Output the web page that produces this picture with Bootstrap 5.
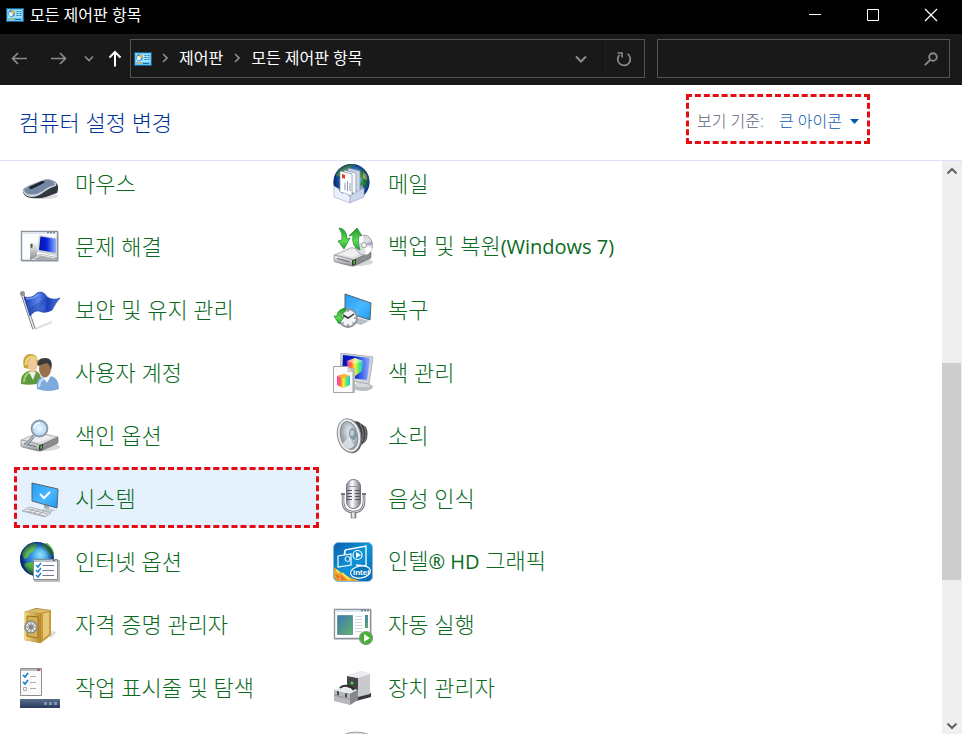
<!DOCTYPE html>
<html lang="ko">
<head>
<meta charset="utf-8">
<meta name="viewport" content="width=device-width, initial-scale=1">
<title>모든 제어판 항목</title>
<link href="https://cdn.jsdelivr.net/npm/bootstrap@5.3.0/dist/css/bootstrap.min.css" rel="stylesheet">
<style>
body{font-family:"Open Sans","Noto Sans CJK KR",sans-serif;font-size:16px;font-weight:300;line-height:24px;background:#fff;color:#000}
svg{display:block;flex:none}
button svg{margin:auto}
.titlebar{background:#000;color:#fff;height:34px;padding:0 2px 4px 6px;gap:6px;font-weight:400}
.win-btns{gap:0}
.win-btn{width:58px;height:34px;border:0;background:none;color:#fff;padding:0}
.toolbar{background:#191919;height:51px;padding:5px 12px 8px 0;color:#8b8b8b}
.nav-btn{border:0;background:none;color:inherit;padding:0;height:38px}
.nav-btn.wide{width:39px}
.nav-btn.slim{width:21px}
.nav-btn.up{width:31px;color:#fff}
.address{border:1px solid #535353;height:39px;flex:514 1 0;padding-left:3px;font-weight:400;min-width:0}
.address a{color:#fff;text-decoration:none;white-space:nowrap}
.address ol{gap:11px;margin:0 0 2px;padding-left:10px}
.addr-btn{border:0;background:none;color:inherit;padding:0;width:42px;height:37px}
.addr-btn.sep{border-left:1px solid #111}
.search{border:1px solid #535353;height:39px;flex:293 1 0;margin-left:12px;min-width:0}
.search input{background:none;border:0;outline:0;color:#fff;min-width:0}
.search button{border:0;background:none;color:inherit;width:36px;padding:0}
.band{height:76px;padding:9px 92px 0 19px;border-bottom:1px solid #d9e3f1}
.band h1{font-size:22px;line-height:30px;font-weight:300;color:#003399;margin:0 0 11px}
.hot{border:3px dashed #e60d12}
.viewby{height:50px;width:184px;padding:4px 8px 0;color:#5a6478;margin-bottom:16px}
.viewby button{border:0;background:none;padding:0;color:#0a59b0;font-weight:300}
.items{gap:8px;padding:0 14px;margin-top:-9px}
.items ul{display:grid;gap:2px;width:305px;align-content:start;margin:0}
.item{display:flex;gap:15px;align-items:center;height:61px;padding:12px 6px 9px;font-size:22px;line-height:30px;color:#0b6a1d;text-decoration:none;white-space:nowrap}
.item:hover{color:#0b6a1d;text-decoration:underline}
.item span{padding-bottom:2px}
.item small{font-size:20px;font-weight:400}
.item.hot{padding:9px 3px 6px;background:#e5f2fd}
.scrollbar-v{width:20px;background:#efefef;color:#606060}
.scrollbar-v button{border:0;background:none;padding:0;height:20px;color:inherit}
.scrollbar-v button:last-child{padding-top:4px}
.thumb{flex:217 1 0;background:#cdcdcd;margin-right:1px}
.before{flex:182 1 0}.after{flex:134 1 0}
</style>
<script src="https://cdn.jsdelivr.net/npm/bootstrap@5.3.0/dist/js/bootstrap.bundle.min.js"></script>
</head>
<body class="vh-100 d-flex flex-column overflow-hidden">
<svg width="0" height="0" class="position-absolute" aria-hidden="true">
<defs>
<linearGradient id="metal" x2="0" y2="1"><stop stop-color="#f8f8f8"/><stop offset="1" stop-color="#8b8d90"/></linearGradient>
<linearGradient id="metalh"><stop stop-color="#85858e"/><stop offset=".4" stop-color="#fff"/><stop offset="1" stop-color="#74747e"/></linearGradient>
<linearGradient id="sky" x2="1" y2="1"><stop stop-color="#1f9df2"/><stop offset=".55" stop-color="#4ab8ff"/><stop offset="1" stop-color="#1c98f0"/></linearGradient>
<linearGradient id="royal"><stop stop-color="#0414a8"/><stop offset=".45" stop-color="#0825d8"/><stop offset="1" stop-color="#8fb0ff"/></linearGradient>
<linearGradient id="flagb"><stop stop-color="#1b3fae"/><stop offset=".4" stop-color="#5c86ec"/><stop offset=".65" stop-color="#1c3dba"/><stop offset="1" stop-color="#4f7be0"/></linearGradient>
<linearGradient id="gold"><stop stop-color="#f3dc8a"/><stop offset="1" stop-color="#b78a2c"/></linearGradient>
<linearGradient id="leaf" x2="0" y2="1"><stop stop-color="#1f9a2b"/><stop offset=".6" stop-color="#5fdc55"/><stop offset="1" stop-color="#22a52a"/></linearGradient>
<linearGradient id="rainbow"><stop stop-color="#ff35d0"/><stop offset=".25" stop-color="#ff6a3c"/><stop offset=".5" stop-color="#ffee35"/><stop offset=".75" stop-color="#48ef6c"/><stop offset="1" stop-color="#2bbcff"/></linearGradient>
<linearGradient id="navy" x2="0" y2="1"><stop stop-color="#5b6d8c"/><stop offset="1" stop-color="#283a5c"/></linearGradient>
<linearGradient id="teal" x2="1" y2="1"><stop stop-color="#3a78b4"/><stop offset="1" stop-color="#63b26b"/></linearGradient>
<linearGradient id="intelb" x2="1" y2="1"><stop stop-color="#0a5fae"/><stop offset=".5" stop-color="#0d93d8"/><stop offset="1" stop-color="#0a68b4"/></linearGradient>
<linearGradient id="green" x2="1" y2="1"><stop stop-color="#7fdc4c"/><stop offset="1" stop-color="#1b7f2c"/></linearGradient>
<radialGradient id="ocean" cx=".6" cy=".38" r=".65"><stop stop-color="#8fe3fb"/><stop offset=".45" stop-color="#2f8fdc"/><stop offset="1" stop-color="#0c2f86"/></radialGradient>
<radialGradient id="rim"><stop offset=".6" stop-color="#06205f" stop-opacity="0"/><stop offset="1" stop-color="#06205f" stop-opacity=".75"/></radialGradient>
<radialGradient id="cone" cx=".6" cy=".4"><stop stop-color="#eef4f7"/><stop offset="1" stop-color="#9aa6ad"/></radialGradient>
<radialGradient id="lens"><stop stop-color="#f4faff"/><stop offset="1" stop-color="#acd3f4"/></radialGradient>
<symbol id="cpl" viewBox="0 0 18 14"><path fill="#16648f" d="M0 0h18v14H0z"/><path fill="#63c2f2" d="M1 1h16v12H1z"/><path fill="#a5e0fb" d="M2 2h14v8H2z"/><circle cx="5.500" cy="5.500" r="3.200" fill="#1f7fc0"/><circle cx="5" cy="6" r="2.200" fill="#e8f4fa"/><path d="M5.500 5.500V2.300A3.200 3.200 0 0 1 8.500 6z" fill="#f5b840"/><path d="M10.500 3.500h2M13.500 3.500h2M10.500 5.500h2M13.500 5.500h2M10.500 7.500h2M13.500 7.500h2" stroke="#1d7dba"/><path d="M3 11.500h5" stroke="#f0b23c"/><path d="M9 11.500h6" stroke="#1970ad"/></symbol>
<symbol id="drive" viewBox="0 0 40 20"><ellipse cx="23" cy="15" rx="17" ry="4" fill="#bbb" opacity=".6"/><path d="M1 8 17 1q2-1 4 0l17 4-17 8z" fill="#dcdde0" stroke="#9a9b9e" stroke-width=".6"/><path d="M6 7.500 20 2l12 3.500L19 10z" fill="#f0f0f2"/><path d="M1 8l20 5v6q-2 .5-4-.3L2 15q-1-.5-1-2z" fill="url(#metal)" stroke="#77797c" stroke-width=".6"/><path d="M21 13l17-8v5q0 1-1 1.500L21 19z" fill="#8a8c90" stroke="#66686b" stroke-width=".6"/><path d="M4 11.500l12 3.200" stroke="#626468"/><path d="M19 13.500l4-1.500v5l-4 1.500z" fill="#2e3c2b"/><path d="M20.500 14l1.500-.6v3l-1.500.6z" fill="#52dc3d"/></symbol>
</defs>
</svg>

<header class="titlebar d-flex align-items-center">
<svg width="18" height="14"><use href="#cpl"/></svg><span class="me-auto">모든 제어판 항목</span>
<div class="win-btns d-flex">
<button class="win-btn" aria-label="최소화"><svg width="14" height="14"><path d="M1 6.500h12" stroke="#fff"/></svg></button>
<button class="win-btn" aria-label="최대화"><svg width="14" height="14"><path d="M1.500 1.500h11v11h-11z" stroke="#fff" fill="none"/></svg></button>
<button class="win-btn" aria-label="닫기"><svg width="14" height="14"><path d="M1 1l12 12M13 1 1 13" stroke="#fff" stroke-width="1.200"/></svg></button>
</div>
</header>

<nav class="toolbar d-flex" aria-label="탐색">
<button class="nav-btn wide" aria-label="뒤로"><svg width="17" height="13"><path d="M16 6.500H1.500M7 1 1.500 6.500 7 12" fill="none" stroke="currentColor" stroke-width="1.700"/></svg></button>
<button class="nav-btn wide" aria-label="앞으로"><svg width="17" height="13"><path d="M1 6.500h14.500M10 1l5.500 5.500L10 12" fill="none" stroke="currentColor" stroke-width="1.700"/></svg></button>
<button class="nav-btn slim" aria-label="최근 위치"><svg width="10" height="7"><path d="M1 1.500l4 4 4-4" fill="none" stroke="currentColor" stroke-width="1.700"/></svg></button>
<button class="nav-btn up" aria-label="위로"><svg width="14" height="17"><path d="M7 16.500V2M1.500 7.500 7 2l5.500 5.500" fill="none" stroke="currentColor" stroke-width="2"/></svg></button>
<div class="address d-flex align-items-center">
<svg width="18" height="14"><use href="#cpl"/></svg>
<ol class="list-unstyled d-flex align-items-center me-auto">
<li><svg width="6" height="10"><path d="M1 1l4 4-4 4" fill="none" stroke="currentColor" stroke-width="1.700"/></svg></li>
<li><a href="#">제어판</a></li>
<li><svg width="6" height="10"><path d="M1 1l4 4-4 4" fill="none" stroke="currentColor" stroke-width="1.700"/></svg></li>
<li><a href="#">모든 제어판 항목</a></li>
</ol>
<button class="addr-btn" aria-label="이전 위치"><svg width="12" height="8"><path d="M1 1.500l5 5 5-5" fill="none" stroke="currentColor" stroke-width="2"/></svg></button>
<button class="addr-btn sep" aria-label="새로 고침"><svg width="16" height="16"><path d="M11.500 2.900A6.300 6.300 0 1 1 3.500 3.800M1.500 2h4.500v4.500" fill="none" stroke="currentColor" stroke-width="1.700"/></svg></button>
</div>
<form class="search d-flex" role="search">
<input class="flex-grow-1" type="search" aria-label="제어판 검색">
<button type="button" aria-label="검색"><svg width="14" height="14"><circle cx="9" cy="5" r="3.800" fill="none" stroke="currentColor" stroke-width="1.900"/><path d="M6.200 7.800.8 13.200" stroke="currentColor" stroke-width="1.900"/></svg></button>
</form>
</nav>

<section class="band d-flex justify-content-between align-items-center">
<h1>컴퓨터 설정 변경</h1>
<div class="viewby hot d-flex align-items-center justify-content-between text-nowrap">
<span id="viewlabel">보기 기준:</span>
<button class="d-flex align-items-center gap-2" aria-describedby="viewlabel">큰 아이콘 <svg width="9" height="5"><path d="M0 0h9L4.500 5z" fill="currentColor"/></svg></button>
</div>
</section>

<main class="d-flex flex-grow-1 overflow-hidden">
<div class="flex-grow-1 overflow-hidden">
<div class="items d-flex">
<ul class="list-unstyled">
<li><a class="item" href="#"><svg width="40" height="40"><ellipse cx="24" cy="32" rx="14" ry="3" fill="#aaa" opacity=".4"/><path d="M3 28Q2 25 8 22L23 16q5-2 11 1 5 3 4 9l-1 3q-6 2-11 4-6 2-15 1Q4 33 3 28z" fill="#2f3740"/><path d="M3 27Q4 24 9 21L23 16q7-2 12 2 2 2 1 4-5 1-12 6-6 5-13 5Q4 32 3 27z" fill="#cfd6dd"/><path d="M4 26q1-2 6-4.500l13-5q7-2 11 1.500l1 3q-6 1-12 6-6 4-12 3.500-6 0-7-4.500z" fill="#7388a3"/><path d="M9 23l13-6q4 0 2 2l-12 6q-3 0-3-2z" fill="#1d242c"/></svg><span>마우스</span></a></li>
<li><a class="item" href="#"><svg width="40" height="40"><path d="M2 5h37v30H2z" fill="#ddd"/><path d="M1.500 4.500h36v29h-36z" fill="#fbfcfd" stroke="#8b959f" stroke-width="1.400"/><path d="M2 5h35v2H2z" fill="#dce6ef"/><path d="M27 5.500h2M30 5.500h2M33 5.500h2" stroke="#727f8d" stroke-width="1.400"/><path d="M10 16l7-1v15l-7 3z" fill="url(#metal)"/><path d="M10.500 17l2-.5v4l-2 .5z" fill="#4c5b3b"/><path d="M19 8l18 3v18l-20-4z" fill="#cfd3da"/><path d="M20.500 9.500 36 12v14l-17-3z" fill="url(#royal)"/><path d="M12 31l8-4 17 3v3H17z" fill="#a8adb4"/><path d="M15 31l6-3 14 3" stroke="#eee" fill="none"/></svg><span>문제 해결</span></a></li>
<li><a class="item" href="#"><svg width="40" height="40"><path d="M15 39 32 32" stroke="#ccc" stroke-width="2" opacity=".6"/><path d="M2 3 14 39" stroke="#777c84" stroke-width="3.400"/><path d="M2 3 14 39" stroke="#e4e6e9" stroke-width="1.600"/><circle cx="2.500" cy="3.500" r="2.500" fill="#8d9499"/><path d="M4 7Q12 9 17 3q6-3 10 4 6 4 13 1-4 4-8 12-7 4-13 1-5-1-9 5z" fill="url(#flagb)" stroke="#1b3b9f" stroke-width=".7"/><path d="M27 7q-5 7-6 14-5-1-11 5l-2-7z" fill="#173ba5" opacity=".35"/><path d="M6 9q8 0 12-4" stroke="#8eafff" fill="none"/></svg><span>보안 및 유지 관리</span></a></li>
<li><a class="item" href="#"><svg width="40" height="40"><path d="M1 31q-1-10 7-13h8q6 2 5 12-10 3-20 1z" fill="#5e9a3f"/><path d="M4 29q0-7 6-10" stroke="#a3cf7c" stroke-width="2" fill="none"/><path d="M9 19l4 8 3-8z" fill="#f0f2e8"/><path d="M4 15Q1 3 9 1q10-1 9 10l-2 6z" fill="#c9a53e"/><ellipse cx="12.500" cy="12" rx="4.500" ry="7.500" fill="#efc89c"/><path d="M6 12q0-7 5-8 5 0 6 3" stroke="#ecd67c" stroke-width="2.500" fill="none"/><path d="M17 36q-2-11 7-13h7q8 2 8 13-10 4-22 0z" fill="#7da9dc"/><path d="M19 34q0-7 6-9" stroke="#bfd9f5" stroke-width="2.500" fill="none"/><path d="M22 23l5 7 4-7z" fill="#eef5fb"/><ellipse cx="25" cy="15.500" rx="6" ry="9" fill="#99704c"/><path d="M18 13q-2-8 7-8 9 0 6 12-1-5-4-7-4 1-9 3z" fill="#37393b"/></svg><span>사용자 계정</span></a></li>
<li><a class="item" href="#"><svg width="40" height="40"><use href="#drive" y="16" width="40" height="20"/><path d="M14 20 6 29" stroke="#76828e" stroke-width="3"/><path d="M14 20 6 29" stroke="#e4e8ee"/><circle cx="19.500" cy="12.500" r="8" fill="url(#lens)" stroke="#8d99a6" stroke-width="1.800"/><path d="M14 12q1-5 6-5" fill="none" stroke="#fff" stroke-width="1.500"/></svg><span>색인 옵션</span></a></li>
<li><a class="item hot" href="#"><svg width="40" height="40"><path d="M20 31l7-2 9 2-7 3z" fill="#c5ccd2"/><path d="M24 24h5v6l-5-1z" fill="#a7b0b8"/><path d="M12 4l26 6-1 19-25-7z" fill="url(#sky)" stroke="#59636c"/><path d="M20 15l4 4 6-6" fill="none" stroke="#fff" stroke-width="2"/><path d="M2 32l8-4 21 6-6 4z" fill="#e4e7ea" stroke="#a1a6ac" stroke-width=".8"/><path d="M5 32l20 5M8 30l20 5M9 33l5-3M14 34l5-3M19 35l5-3" stroke="#9ca2a8" stroke-width=".8"/></svg><span>시스템</span></a></li>
<li><a class="item" href="#"><svg width="40" height="40"><circle cx="17" cy="17" r="17" fill="url(#ocean)"/><path d="M2 12Q5 3 13 1l5 1-3 3-1 4-4 2-3 5-3 1zM23 2l4-1q6 4 7 11l-4 1-3-5-4-2zM6 21l6-1 5 4-1 5-4 4q-6-4-8-10z" fill="url(#green)"/><circle cx="17" cy="17" r="17" fill="url(#rim)"/><path d="M14 18h26v22H14z" fill="#bbb"/><path d="M13.500 17.500h24v20h-24z" fill="#fff" stroke="#848d96"/><path d="M14 18h23v2H14z" fill="#b9c4cd"/><path d="M33 18.500h2" stroke="#596775"/><path d="M22.500 23.500H34M22.500 28.500H34M22.500 33.500H34" stroke="#6e7392"/><path d="M16 23l2 2 3-4M16 28l2 2 3-4M16 33l2 2 3-4" stroke="#1d83cf" stroke-width="1.500" fill="none"/></svg><span>인터넷 옵션</span></a></li>
<li><a class="item" href="#"><svg width="40" height="40"><path d="M30 34l7-7-6-1z" fill="#bbb" opacity=".5"/><path d="M4 7 16 3l15 2v25L20 38 4 35z" fill="#a87b25"/><path d="M4 7l17 1v30L4 35z" fill="url(#gold)"/><path d="M21 8l10-3v25l-10 8z" fill="#c79a3a"/><path d="M23 9l6-2v22l-6 5z" fill="#e6c976"/><path d="M4 7 16 4l15 1-10 3z" fill="#d9bd6c"/><path d="M7 11l11 1v21L7 31z" fill="#d8b252" stroke="#946e25"/><circle cx="11" cy="22" r="6" fill="#ddd" stroke="#8a8a86" stroke-width="1.600"/><path d="M11 15.500v13M4.500 22h13M6.500 17.500l9 9M15.500 17.500l-9 9" stroke="#9a9b98"/><circle cx="11" cy="22" r="2.500" fill="#85858a"/></svg><span>자격 증명 관리자</span></a></li>
<li><a class="item" href="#"><svg width="40" height="40"><path d="M.5.500h21v27H.5z" fill="#fafafa" stroke="#8c8e91"/><path d="M1 1h20v2H1z" fill="#b8bec3"/><path d="M17 1h3v2h-3z" fill="#c65a50"/><path d="M3 7l2 2 3-4M3 14l2 2 3-4" stroke="#1c7ec5" stroke-width="1.700" fill="none"/><path d="M10 8.500h6M10 14.500h6M10 20.500h6" stroke="#aeb1b5"/><path d="M3.500 19.500h3v3h-3z" stroke="#a8abae" fill="none"/><path d="M0 31h40v9H0z" fill="url(#navy)"/><path d="M24 34h3v3h-3zM29 34h3v3h-3zM34 34h3v3h-3z" fill="#8492ab"/></svg><span>작업 표시줄 및 탐색</span></a></li>
</ul>
<ul class="list-unstyled">
<li><a class="item" href="#"><svg width="40" height="40"><circle cx="18.500" cy="18" r="18" fill="url(#ocean)"/><path d="M3 9Q8 1 18 0l6 1-8 3-8 7-5 2zM29 4q6 5 7 12l-4 8-5-3 2-6-4-4z" fill="url(#green)"/><path d="M30 8l4 3v5l-4-2z" fill="#e7de76"/><circle cx="18.500" cy="18" r="18" fill="url(#rim)"/><path d="M6 24l12-4 12 2v8l-12 6z" fill="#8f9bc0"/><path d="M15 4l12 3v22l-12-3z" fill="#cdd6e6" stroke="#7d899f" stroke-width=".7"/><path d="M11 6l12 3v21l-12-4z" fill="#f5f7fa" stroke="#7d899f" stroke-width=".7"/><path d="M7 7l12 3v22L7 28z" fill="#fff" stroke="#7d899f" stroke-width=".7"/><path d="M9 10l3 .7v4L9 14z" fill="#e53d24"/><path d="M12 19v7M14.500 17v10M17 19v8" stroke="#8b96b6"/><path d="M1 22l5 3q1 5 6 4l5 3v7L1 33z" fill="#edf1fb" stroke="#9aa6ca" stroke-width=".6"/><path d="M17 32l14-8v9l-14 6z" fill="#cdd5ec" stroke="#9aa6ca" stroke-width=".6"/></svg><span>메일</span></a></li>
<li><a class="item" href="#"><svg width="40" height="40"><use href="#drive" y="20" width="40" height="20"/><ellipse cx="31" cy="18" rx="8.500" ry="10" fill="#dcdde4" stroke="#a4a5ae"/><path d="M31 18l-7-5q2-4 6-5zM31 18l8 3q-1 5-6 7z" fill="#fff"/><path d="M31 18l8-4 .5 4z" fill="#b3a2c8"/><circle cx="31" cy="18" r="2.500" fill="#fff" stroke="#999"/><path d="M6 1q8 1 8 11l3-1-6 11-6-8 4-1Q10 6 6 1z" fill="url(#leaf)" stroke="#178622" stroke-width=".7"/><path d="M27 23q-9-3-7-15l-4 1 8-8 5 8-3-1q-2 8 1 15z" fill="url(#leaf)" stroke="#178622" stroke-width=".7"/></svg><span>백업 및 복원<small>(Windows 7)</small></span></a></li>
<li><a class="item" href="#"><svg width="40" height="40"><path d="M18 32l8-4 10 3-8 4z" fill="#b6bec6"/><path d="M12 4l26 9-1 17-25-8z" fill="url(#sky)" stroke="#59636c"/><circle cx="15" cy="28" r="9" fill="#f1f3f5" stroke="#8b9197" stroke-width="1.800"/><path d="M15 20v2M15 34v2M7 28h2M21 28h2M9.500 22.500l1 1M20.500 33.500l-1-1M9.500 33.500l1-1" stroke="#777" stroke-width="1.200"/><path d="M10 25l5 3 6-4" fill="none" stroke="#333" stroke-width="1.500"/><path d="M12 18q-8 2-8 8H1l5 8 5-7H8q0-4 5-6z" fill="url(#leaf)" stroke="#15831e" stroke-width=".7"/></svg><span>복구</span></a></li>
<li><a class="item" href="#"><svg width="40" height="40"><ellipse cx="30" cy="34" rx="10" ry="4" fill="#b9bcc2"/><path d="M24 27l10 1 3 6H23z" fill="#d7d9df"/><path d="M8 0l32 4-4 27-29-5z" fill="#d2d5dc" stroke="#9699a2" stroke-width=".7"/><path d="M10 2l27 3-3 22L9 24z" fill="url(#royal)"/><path d="M14 8l8-3 8 3-1 10-7 5-7-5z" fill="url(#rainbow)"/><path d="M14 8l8-3 8 3-8 3z" fill="#fff" opacity=".45"/><path d="M1 15h21v25H1z" fill="#bbb"/><path d="M.5 13.500H15l5 5v21H.5z" fill="#fbfbfc" stroke="#a0a3a9"/><path d="M15 13.500v5h5z" fill="#ddd" stroke="#aaa" stroke-width=".6"/><path d="M4 23l7-2 6 2v9l-7 3-6-3z" fill="url(#rainbow)"/><path d="M4 23l7-2 6 2-7 2z" fill="#ffb23b"/></svg><span>색 관리</span></a></li>
<li><a class="item" href="#"><svg width="40" height="40"><path d="M20 6q4-2 7 1l6 4q3 7 0 14l-8 7z" fill="#3e4143"/><path d="M27 8q6 9 1 21M31 10q4 8 0 17" stroke="#84898c" fill="none"/><ellipse cx="17" cy="20" rx="12" ry="17.500" fill="#4d5154" transform="rotate(-12 17 20)"/><ellipse cx="16" cy="19.500" rx="11.500" ry="17" fill="#e7e9ea" stroke="#8a8e91" transform="rotate(-12 16 19.500)"/><ellipse cx="16" cy="19.500" rx="8.500" ry="14" fill="url(#cone)" stroke="#7e888d" transform="rotate(-12 16 19.500)"/><path d="M16 21 9 28l5 5q5 0 7-4z" fill="#e4eaed" opacity=".8"/><ellipse cx="20" cy="18" rx="4" ry="6" fill="#849aa7" transform="rotate(-12 20 18)"/><ellipse cx="19" cy="17" rx="2" ry="3" fill="#c0cdd4"/></svg><span>소리</span></a></li>
<li><a class="item" href="#"><svg width="40" height="40"><path d="M10 15v7q0 11 10.500 11T31 22v-7" stroke="#74747e" stroke-width="2.600" fill="none"/><path d="M10 15v7q0 11 10.500 11T31 22v-7" stroke="#d9d9e0" fill="none"/><path d="M18 33h5v6h-5z" fill="url(#metalh)" stroke="#777781" stroke-width=".6"/><rect x="13.500" y=".5" width="14" height="29" rx="7" fill="url(#metalh)" stroke="#70707c"/><path d="M14 11.500h5M22 11.500h5M14 14.500h5M22 14.500h5M14 17.500h5M22 17.500h5M14 20.500h5M22 20.500h5" stroke="#555562" stroke-width="1.200"/><path d="M15 7.500h11" stroke="#9898a6"/><path d="M8 15h4M29 15h4" stroke="#777783" stroke-width="2"/></svg><span>음성 인식</span></a></li>
<li><a class="item" href="#"><svg width="40" height="40"><rect x=".5" y=".5" width="39" height="39" rx="5" fill="url(#intelb)" stroke="#8ab9d8"/><path d="M1 25Q10 34 27 39H5q-4-1-4-5z" fill="#e2a52e"/><path d="M2 32l5 2-2 4zM8 33l5 5H8z" fill="#f06d30"/><path d="M3 28l4 3M9 31l8 7" stroke="#f5e35c" stroke-width="2"/><path d="M12 8l21-4v20l-10-1M12 8v4" fill="none" stroke="#fff" stroke-width="1.300"/><path d="M5 14l13-2v11L5 25zM11 13l1-5" fill="none" stroke="#fff" stroke-width="1.200"/><circle cx="24.500" cy="13" r="4.500" fill="none" stroke="#fff" stroke-width="1.200"/><path d="M23 10l5 3-5 3z" fill="#fff"/><circle cx="14.500" cy="17" r="2.500" fill="none" stroke="#fff"/><ellipse cx="27.500" cy="30" rx="10" ry="6" fill="#0874bb" stroke="#fff" stroke-width="1.200" transform="rotate(-10 27.500 30)"/><text x="20" y="33" font-family="Liberation Sans,sans-serif" font-size="8" font-weight="700" fill="#fff">intel</text></svg><span>인텔<small>® HD</small> 그래픽</span></a></li>
<li><a class="item" href="#"><svg width="40" height="40"><path d="M2 5h37v30H2z" fill="#ddd"/><path d="M1.500 4.500h36v29h-36z" fill="#fff" stroke="#8b959f" stroke-width="1.400"/><path d="M2 5h35v2H2z" fill="#dce6ef"/><path d="M28 5.500h2M31 5.500h2M34 5.500h2" stroke="#727f8d" stroke-width="1.400"/><path d="M4.500 10.500h15v19h-15z" fill="url(#teal)" stroke="#68979a"/><path d="M22 11.500h7M22 14.500h7M22 17.500h7M22 20.500h7M22 23.500h7M22 26.500h7" stroke="#d4d7da"/><path d="M32 10h3v13h-3z" fill="url(#teal)"/><circle cx="33" cy="33" r="6.500" fill="#3fb32d" stroke="#8a9a87" stroke-width="1.200"/><path d="M31 29l6 4-6 4z" fill="#fff"/></svg><span>자동 실행</span></a></li>
<li><a class="item" href="#"><svg width="40" height="40"><path d="M20 28l18-3v4l-15 4z" fill="#36383b"/><path d="M14 8 28 3l9 3v20l-12 3-11-4z" fill="#c8cacd"/><path d="M14 8l11 2v19l-11-3z" fill="#424447"/><path d="M14 8 28 3l9 3-12 4z" fill="#ececee"/><circle cx="19" cy="15" r="1.500" fill="#3de43c"/><path d="M1 22l9-4 15 4-8 4z" fill="#e9eaec"/><path d="M1 22l16 4v11L1 33z" fill="#b6b8bc"/><path d="M17 26l8-4v10l-8 5z" fill="#85878b"/><path d="M7 20q3-4 11-1l3 3" fill="none" stroke="#2b2d2f" stroke-width="2"/><path d="M4 23l2 .5v4L4 27zM12 25l2 .5v4l-2-.5z" fill="#46494d"/><path d="M1 27l16 4 8-5" stroke="#8d8f93" fill="none"/></svg><span>장치 관리자</span></a></li>
<li class="item" aria-hidden="true"><svg width="40" height="40"><path d="M10 4q13-6 27 0v20H10z" fill="#dedfe0" stroke="#9b9da0"/></svg></li>
</ul>
</div>
</div>
<div class="scrollbar-v d-flex flex-column flex-shrink-0">
<button aria-label="위로 스크롤"><svg width="12" height="8"><path d="M1.500 6.500 6 2l4.500 4.500" fill="none" stroke="currentColor" stroke-width="2"/></svg></button>
<div class="before"></div><div class="thumb"></div><div class="after"></div>
<button aria-label="아래로 스크롤"><svg width="12" height="8"><path d="M1.500 1.500 6 6l4.500-4.500" fill="none" stroke="currentColor" stroke-width="2"/></svg></button>
</div>
</main>
</body>
</html>
